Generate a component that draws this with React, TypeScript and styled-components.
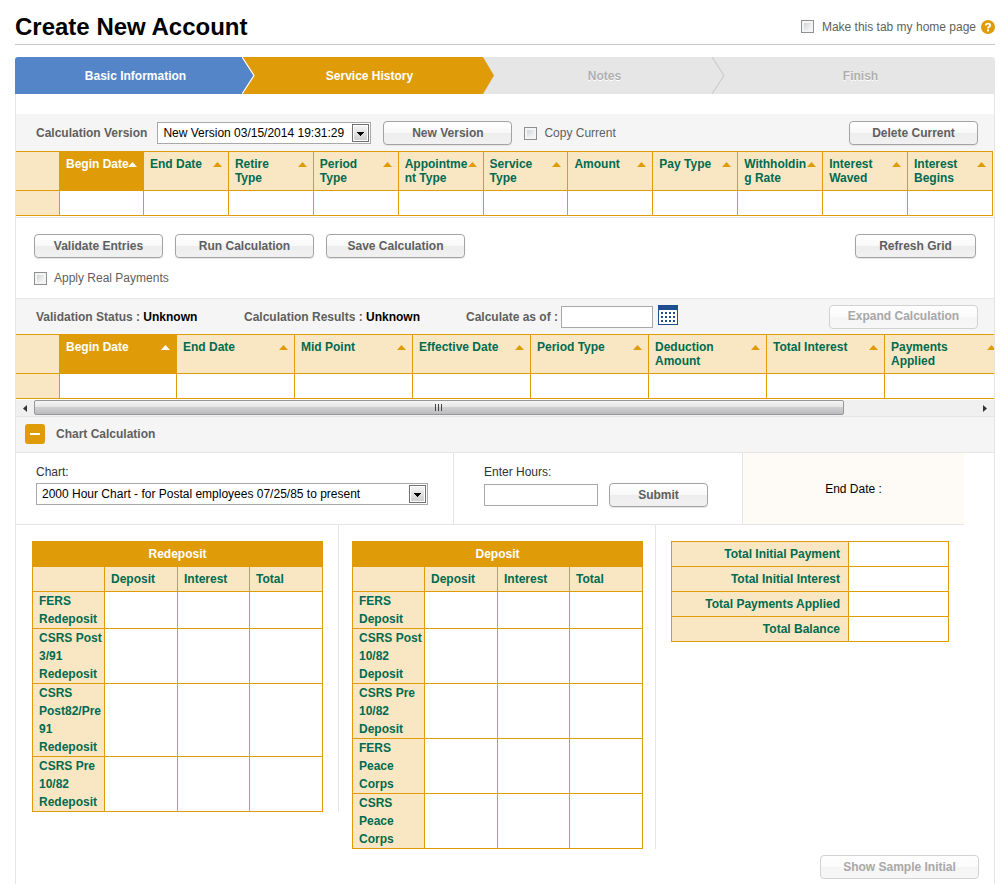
import React from "react";
import styled, { createGlobalStyle, css } from "styled-components";

const gold = "#df9c08";
const cream = "#f9e7c3";
const green = "#006b51";
const line = "#e5e5e5";
const grey = "#f5f5f5";
const slate = "#5f5f5f";

const GlobalStyle = createGlobalStyle`
  *, *::before, *::after { box-sizing: border-box; }
  body { margin: 0; background: #fff; }
  body, button, input, select, table {
    font-family: "Liberation Sans", Arial, sans-serif;
    font-size: 12px;
  }
`;

const Page = styled.div`
  padding: 0 13px 0 15px;
  line-height: 14px;
  color: ${slate};
`;

const Header = styled.header`
  display: flex;
  align-items: center;
  justify-content: space-between;
  height: 45px;
  padding-top: 9px;
  border-bottom: 1px solid #c8c8c8;
`;

const Title = styled.h1`
  margin: 0;
  font-size: 24px;
  line-height: 28px;
  color: #000;
`;

const HomeOption = styled.div`
  display: flex;
  align-items: center;
  gap: 5px;
`;

const HelpButton = styled.button`
  display: flex;
  padding: 0;
  border: 0;
  background: none;
`;

const CheckLabel = styled.label<{ $gap?: number }>`
  display: flex;
  align-items: center;
  gap: ${(p) => p.$gap ?? 7}px;
`;

const Checkbox = styled.input.attrs({ type: "checkbox" })`
  appearance: none;
  flex: none;
  width: 13px;
  height: 13px;
  margin: 0;
  border: 1px solid #8e8f8f;
  background: linear-gradient(135deg, #c6cbd1, #f6f6f6 80%) padding-box;
  box-shadow: inset 0 0 0 2px #f4f4f4;
`;

const Steps = styled.ol`
  display: grid;
  grid-template-columns: 227fr 241fr 229fr 283fr;
  margin: 12px 0 0;
  padding: 0;
  height: 37px;
  list-style: none;
  overflow: hidden;
  border-radius: 3px 3px 0 0;
`;

const stepLook = {
  done: css`background: #5485c8; color: #fff;`,
  current: css`background: ${gold}; color: #fff;`,
  todo: css`background: #e6e6e6; color: #afafaf; text-shadow: 0 1px 0 #fff;`,
};

const Step = styled.li<{ $state: keyof typeof stepLook }>`
  position: relative;
  display: flex;
  align-items: center;
  justify-content: center;
  padding-left: 14px;
  font-weight: bold;
  ${(p) => stepLook[p.$state]}
`;

const StepTip = styled.svg`
  position: absolute;
  z-index: 1;
  top: 0;
  left: 100%;
`;

const Panel = styled.main`
  padding: 20px 0 5px;
  border: solid ${line};
  border-width: 0 1px;
`;

const Toolbar = styled.div`
  display: flex;
  align-items: center;
  height: 37px;
  padding: 1px 16px 0 20px;
  background: ${grey};
`;

const FieldLabel = styled.label`
  font-weight: bold;
`;

const SelectBox = styled.div<{ $width: number }>`
  position: relative;
  width: ${(p) => p.$width}px;
  height: 22px;
`;

const Select = styled.select`
  appearance: none;
  width: 100%;
  height: 100%;
  padding: 0 18px 0 5px;
  border: 1px solid #a9a9a9;
  border-radius: 0;
  background: #fff;
  color: #000;
`;

const SelectArrow = styled.svg`
  position: absolute;
  top: 2px;
  right: 2px;
  pointer-events: none;
`;

const TextInput = styled.input.attrs({ type: "text" })<{ $width: number }>`
  width: ${(p) => p.$width}px;
  height: 22px;
  padding: 0 4px;
  border: 1px solid #a9a9a9;
  background: #fff;
`;

const Button = styled.button<{ $width: number }>`
  flex: none;
  width: ${(p) => p.$width}px;
  height: 24px;
  padding: 0 0 1px;
  border: 1px solid #a3a3a3;
  border-radius: 4px;
  background: linear-gradient(#fff, #f8f8f8 50%, #ededed 50%, #f1f1f1);
  box-shadow: 0 1px 1px #e4e4e4;
  color: ${slate};
  font-weight: bold;
  line-height: 14px;
  &:disabled {
    border-color: #d2d2d2;
    background: linear-gradient(#fefefe, #fbfbfb 50%, #f5f5f5 50%, #f7f7f7);
    box-shadow: none;
    color: #a8a8a8;
  }
`;

const Spacer = styled.div`
  flex: 1;
`;

const Gap = styled.div<{ $size: number }>`
  flex: none;
  width: ${(p) => p.$size}px;
`;

const GridScroller = styled.div`
  overflow: hidden;
`;

const EntryArea = styled.div`
  padding-right: 1px;
  border-bottom: 1px solid ${line};
`;

const GridTable = styled.table<{ $width?: number }>`
  width: ${(p) => (p.$width ? `${p.$width}px` : "100%")};
  table-layout: fixed;
  border-spacing: 0;
  border-top: 1px solid ${gold};
  margin-bottom: 1px;
`;

const GridHead = styled.th<{ $sorted?: boolean }>`
  height: 39px;
  padding: 0;
  vertical-align: top;
  border: solid ${gold};
  border-width: 0 1px 1px 0;
  background: ${(p) => (p.$sorted ? gold : cream)};
`;

const SortButton = styled.button<{ $sorted: boolean }>`
  display: flex;
  align-items: flex-start;
  width: 100%;
  padding: 5px 6px 0 6px;
  border: 0;
  background: none;
  color: ${(p) => (p.$sorted ? "#fff" : green)};
  font-weight: bold;
  line-height: 14px;
  text-align: left;
`;

const SortText = styled.span`
  flex: 1;
  min-width: 0;
  overflow-wrap: anywhere;
`;

const SortArrow = styled.svg`
  flex: none;
  margin: 5px 0 0 -1px;
`;

const GridCell = styled.td<{ $marker?: boolean }>`
  height: 25px;
  padding: 0;
  border: solid ${gold};
  border-width: 0 1px 1px 0;
  background: ${(p) => (p.$marker ? cream : "#fff")};
`;

const Actions = styled.div`
  padding: 16px 18px 13px;
`;

const ButtonRow = styled.div`
  display: flex;
  gap: 12px;
  margin-bottom: 13px;
`;

const StatusBar = styled.div`
  display: flex;
  align-items: center;
  height: 36px;
  padding: 0 16px 0 20px;
  border-top: 1px solid ${line};
  background: ${grey};
  font-weight: bold;
`;

const Status = styled.div`
  width: 208px;
  & + & {
    width: 222px;
  }
`;

const StatusValue = styled.strong`
  color: #000;
`;

const IconButton = styled.button`
  display: flex;
  margin-left: 5px;
  padding: 0 0 4px;
  border: 0;
  background: none;
`;

const ScrollBar = styled.div`
  display: grid;
  grid-template-columns: 18px 1fr 18px;
  align-items: center;
  justify-items: center;
  height: 16px;
  background: #f0f0f0;
`;

const Track = styled.div`
  align-self: start;
  justify-self: stretch;
`;

const Thumb = styled.div`
  display: flex;
  align-items: center;
  justify-content: center;
  width: 86%;
  height: 15px;
  border: 1px solid #979797;
  border-radius: 2px;
  background: linear-gradient(#f5f5f5, #e6e6e7 45%, #cfcfd1 50%, #bcbcc0);
`;

const SectionBar = styled.div`
  display: flex;
  align-items: center;
  gap: 11px;
  height: 37px;
  padding: 0 0 1px 9px;
  border: solid ${line};
  border-width: 1px 0;
  background: ${grey};
`;

const SectionTitle = styled.h2`
  margin: 0;
  font-size: 12px;
  line-height: 14px;
`;

const CollapseButton = styled.button`
  display: flex;
  align-items: center;
  justify-content: center;
  width: 20px;
  height: 20px;
  padding: 0;
  border: 0;
  border-radius: 3px;
  background: ${gold};
`;

const Filters = styled.div`
  display: grid;
  grid-template-columns: 438fr 289fr 221fr 30fr;
  height: 72px;
`;

const FilterCell = styled.div<{ $inset?: number; $last?: boolean }>`
  display: flex;
  flex-direction: column;
  gap: 4px;
  padding: 12px 0 0 ${(p) => p.$inset ?? 0}px;
  border-bottom: 1px solid ${line};
  border-right: ${(p) => (p.$last ? "0" : `1px solid ${line}`)};
  color: #333;
`;

const EndDate = styled(FilterCell)`
  justify-content: center;
  align-items: center;
  padding: 0;
  background: #fefaf5;
  color: #000;
`;

const HoursRow = styled.div`
  display: flex;
  align-items: center;
  gap: 11px;
`;

const Totals = styled.div`
  display: grid;
  grid-template-columns: 323fr 317fr 338fr;
  align-items: start;
`;

const TotalsColumn = styled.section<{ $left: number; $right: number; $last?: boolean }>`
  padding: 16px ${(p) => p.$right}px 0 ${(p) => p.$left}px;
  border-right: ${(p) => (p.$last ? "0" : `1px solid ${line}`)};
`;

const MoneyTable = styled.table`
  width: 100%;
  table-layout: fixed;
  border-spacing: 0;
  border: solid ${gold};
  border-width: 1px 0 0 1px;
  color: ${green};
  line-height: 18px;
  th, td {
    border: solid ${gold};
    border-width: 0 1px 1px 0;
  }
`;

const TableTitle = styled.th`
  height: 25px;
  padding: 0;
  background: ${gold};
  color: #fff;
`;

const ColumnHead = styled.th`
  height: 25px;
  padding: 0 0 0 6px;
  background: ${cream};
  text-align: left;
`;

const RowHead = styled.th`
  padding: 0 0 0 6px;
  background: ${cream};
  text-align: left;
`;

const SumHead = styled.th`
  height: 25px;
  padding: 0 8px 0 0;
  background: ${cream};
  text-align: right;
`;

const BottomBar = styled.div`
  display: flex;
  justify-content: flex-end;
  padding: 6px 15px 0 0;
`;

const entryColumns = [
  "Begin Date", "End Date", "Retire Type", "Period Type", "Appointment Type",
  "Service Type", "Amount", "Pay Type", "Withholding Rate", "Interest Waved",
  "Interest Begins",
];

const resultColumns = [
  "Begin Date", "End Date", "Mid Point", "Effective Date", "Period Type",
  "Deduction Amount", "Total Interest", "Payments Applied",
];

function Grid({ columns, width, firstWidth }: { columns: string[]; width?: number; firstWidth: number }) {
  return (
    <GridTable $width={width}>
      <colgroup>
        <col width={44} />
        <col width={firstWidth} />
      </colgroup>
      <thead>
        <tr>
          <GridHead as="td" />
          {columns.map((name, i) => (
            <GridHead key={name} scope="col" $sorted={i === 0}>
              <SortButton type="button" $sorted={i === 0}>
                <SortText>{name}</SortText>
                <SortArrow width="9" height="5" viewBox="0 0 9 5" aria-hidden="true">
                  <path d="M4.5 0L9 5H0z" fill={i === 0 ? "#fff" : gold} />
                </SortArrow>
              </SortButton>
            </GridHead>
          ))}
        </tr>
      </thead>
      <tbody>
        <tr>
          <GridCell $marker />
          {columns.map((name) => (
            <GridCell key={name} />
          ))}
        </tr>
      </tbody>
    </GridTable>
  );
}

function Money({ title, rows }: { title: string; rows: string[] }) {
  return (
    <MoneyTable>
      <colgroup>
        <col width={72} />
        <col />
        <col width={72} />
        <col />
      </colgroup>
      <thead>
        <tr>
          <TableTitle colSpan={4}>{title}</TableTitle>
        </tr>
        <tr>
          <ColumnHead as="td" />
          <ColumnHead scope="col">Deposit</ColumnHead>
          <ColumnHead scope="col">Interest</ColumnHead>
          <ColumnHead scope="col">Total</ColumnHead>
        </tr>
      </thead>
      <tbody>
        {rows.map((row) => (
          <tr key={row}>
            <RowHead scope="row">{row}</RowHead>
            <td />
            <td />
            <td />
          </tr>
        ))}
      </tbody>
    </MoneyTable>
  );
}

function DropDown({ id, width, value }: { id: string; width: number; value: string }) {
  return (
    <SelectBox $width={width}>
      <Select id={id} defaultValue={value}>
        <option>{value}</option>
      </Select>
      <SelectArrow width="17" height="18" viewBox="0 0 17 18" aria-hidden="true">
        <defs>
          <linearGradient id={`${id}-face`} x1="0" y1="0" x2="0" y2="1">
            <stop offset="0" stopColor="#f4f4f4" />
            <stop offset="1" stopColor="#cfcfcf" />
          </linearGradient>
        </defs>
        <rect x=".5" y=".5" width="16" height="17" fill="#fff" stroke="#707070" />
        <rect x="2" y="2" width="13" height="14" fill={`url(#${id}-face)`} />
        <path d="M5 8h7v1h-1v1h-1v1H9v1H8v-1H7v-1H6V9H5z" fill="#000" />
      </SelectArrow>
    </SelectBox>
  );
}

function CalendarIcon() {
  const dots = [7, 11, 15].flatMap((y) => [3, 7, 11, 15].map((x) => ({ x, y })));
  return (
    <svg width="20" height="20" viewBox="0 0 20 20" aria-hidden="true">
      <rect width="20" height="20" fill="#1f4f8f" />
      <rect x="1" y="5" width="18" height="14" fill="#fff" />
      {dots.map((d) => (
        <rect key={`${d.x}-${d.y}`} x={d.x} y={d.y} width="2" height="2" fill="#1f4f8f" />
      ))}
    </svg>
  );
}

export default function App() {
  return (
    <Page>
      <GlobalStyle />
      <Header>
        <Title>Create New Account</Title>
        <HomeOption>
          <CheckLabel $gap={8}>
            <Checkbox />
            Make this tab my home page
          </CheckLabel>
          <HelpButton type="button" aria-label="Help">
            <svg width="14" height="14" viewBox="0 0 14 14" aria-hidden="true">
              <circle cx="7" cy="7" r="7" fill={gold} />
              <path d="M4.8 5.4C4.8 3 9.2 3 9.2 5.4C9.2 6.9 7 6.8 7 8.4" fill="none" stroke="#fff" strokeWidth="1.8" />
              <rect x="6" y="9.4" width="2" height="2" fill="#fff" />
            </svg>
          </HelpButton>
        </HomeOption>
      </Header>

      <Steps>
        <Step $state="done">
          Basic Information
          <StepTip width="13" height="37" viewBox="0 0 13 37" aria-hidden="true">
            <path d="M0 0L12 18.5L0 37z" fill="#5485c8" />
            <path d="M0 0L12 18.5L0 37" fill="none" stroke="#fff" strokeWidth="1.2" />
          </StepTip>
        </Step>
        <Step $state="current" aria-current="step">
          Service History
          <StepTip width="12" height="37" viewBox="0 0 12 37" aria-hidden="true">
            <path d="M0 0L11 18.5L0 37z" fill={gold} />
          </StepTip>
        </Step>
        <Step $state="todo">
          Notes
          <StepTip width="13" height="37" viewBox="0 0 13 37" aria-hidden="true">
            <path d="M0 0L12 18.5L0 37" fill="none" stroke="#c4c4c4" />
          </StepTip>
        </Step>
        <Step $state="todo">Finish</Step>
      </Steps>

      <Panel>
        <Toolbar>
          <FieldLabel htmlFor="version">Calculation Version</FieldLabel>
          <Gap $size={10} />
          <DropDown id="version" width={214} value="New Version 03/15/2014 19:31:29" />
          <Gap $size={12} />
          <Button type="button" $width={129}>New Version</Button>
          <Gap $size={12} />
          <CheckLabel>
            <Checkbox />
            Copy Current
          </CheckLabel>
          <Spacer />
          <Button type="button" $width={129}>Delete Current</Button>
        </Toolbar>
        <EntryArea>
          <Grid columns={entryColumns} firstWidth={84} />
        </EntryArea>

        <Actions>
          <ButtonRow>
            <Button type="button" $width={129}>Validate Entries</Button>
            <Button type="button" $width={139}>Run Calculation</Button>
            <Button type="button" $width={139}>Save Calculation</Button>
            <Spacer />
            <Button type="button" $width={121}>Refresh Grid</Button>
          </ButtonRow>
          <CheckLabel>
            <Checkbox />
            Apply Real Payments
          </CheckLabel>
        </Actions>

        <StatusBar>
          <Status>
            Validation Status : <StatusValue>Unknown</StatusValue>
          </Status>
          <Status>
            Calculation Results : <StatusValue>Unknown</StatusValue>
          </Status>
          <FieldLabel htmlFor="as-of">Calculate as of :</FieldLabel>
          <Gap $size={3} />
          <TextInput id="as-of" $width={92} />
          <IconButton type="button" aria-label="Pick a date">
            <CalendarIcon />
          </IconButton>
          <Spacer />
          <Button type="button" $width={149} disabled>Expand Calculation</Button>
        </StatusBar>
        <GridScroller>
          <Grid columns={resultColumns} width={987} firstWidth={117} />
        </GridScroller>
        <ScrollBar>
          <svg width="4" height="7" viewBox="0 0 4 7" aria-hidden="true">
            <path d="M4 0v7L0 3.5z" fill="#333" />
          </svg>
          <Track>
            <Thumb>
              <svg width="8" height="7" viewBox="0 0 8 7" aria-hidden="true">
                <path d="M.5 0v7M3.5 0v7M6.5 0v7" stroke="#444" />
              </svg>
            </Thumb>
          </Track>
          <svg width="4" height="7" viewBox="0 0 4 7" aria-hidden="true">
            <path d="M0 0v7l4-3.5z" fill="#333" />
          </svg>
        </ScrollBar>

        <SectionBar>
          <CollapseButton type="button" aria-label="Collapse">
            <svg width="10" height="2" viewBox="0 0 10 2" aria-hidden="true">
              <rect width="10" height="2" fill="#fff" />
            </svg>
          </CollapseButton>
          <SectionTitle>Chart Calculation</SectionTitle>
        </SectionBar>
        <Filters>
          <FilterCell $inset={20}>
            <label htmlFor="chart">Chart:</label>
            <DropDown id="chart" width={392} value="2000 Hour Chart - for Postal employees 07/25/85 to present" />
          </FilterCell>
          <FilterCell $inset={30}>
            <label htmlFor="hours">Enter Hours:</label>
            <HoursRow>
              <TextInput id="hours" $width={114} />
              <Button type="button" $width={99}>Submit</Button>
            </HoursRow>
          </FilterCell>
          <EndDate $last>End Date :</EndDate>
        </Filters>

        <Totals>
          <TotalsColumn $left={16} $right={15}>
            <Money
              title="Redeposit"
              rows={["FERS Redeposit", "CSRS Post 3/91 Redeposit", "CSRS Post82/Pre 91 Redeposit", "CSRS Pre 10/82 Redeposit"]}
            />
          </TotalsColumn>
          <TotalsColumn $left={13} $right={12}>
            <Money
              title="Deposit"
              rows={["FERS Deposit", "CSRS Post 10/82 Deposit", "CSRS Pre 10/82 Deposit", "FERS Peace Corps", "CSRS Peace Corps"]}
            />
          </TotalsColumn>
          <TotalsColumn $left={15} $right={45} $last>
            <MoneyTable>
              <colgroup>
                <col />
                <col width={100} />
              </colgroup>
              <tbody>
                {["Total Initial Payment", "Total Initial Interest", "Total Payments Applied", "Total Balance"].map((name) => (
                  <tr key={name}>
                    <SumHead scope="row">{name}</SumHead>
                    <td />
                  </tr>
                ))}
              </tbody>
            </MoneyTable>
          </TotalsColumn>
        </Totals>
        <BottomBar>
          <Button type="button" $width={159} disabled>Show Sample Initial</Button>
        </BottomBar>
      </Panel>
    </Page>
  );
}
